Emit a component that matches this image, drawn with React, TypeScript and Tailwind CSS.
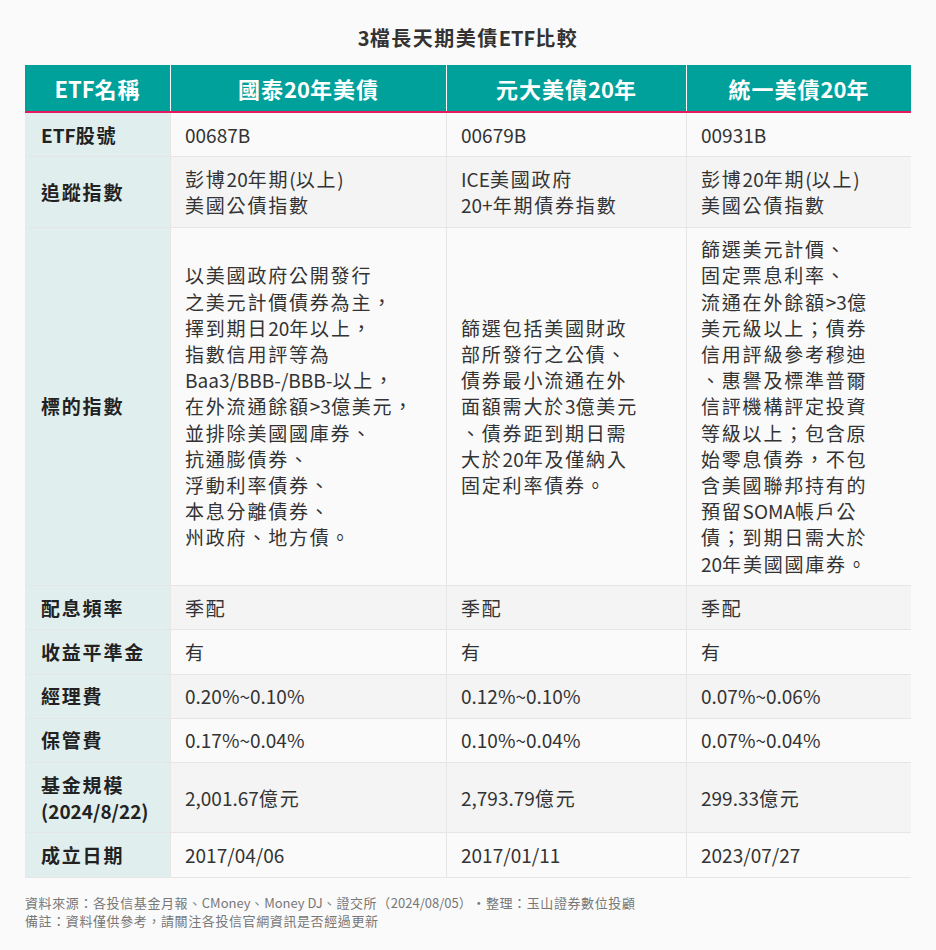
const rows: { label: string[]; cells: string[][] }[] = [
  { label: ["ETF股號"], cells: [["00687B"], ["00679B"], ["00931B"]] },
  {
    label: ["追蹤指數"],
    cells: [
      ["彭博20年期(以上)", "美國公債指數"],
      ["ICE美國政府", "20+年期債券指數"],
      ["彭博20年期(以上)", "美國公債指數"],
    ],
  },
  {
    label: ["標的指數"],
    cells: [
      [
        "以美國政府公開發行",
        "之美元計價債券為主，",
        "擇到期日20年以上，",
        "指數信用評等為",
        "Baa3/BBB-/BBB-以上，",
        "在外流通餘額>3億美元，",
        "並排除美國國庫券、",
        "抗通膨債券、",
        "浮動利率債券、",
        "本息分離債券、",
        "州政府、地方債。",
      ],
      [
        "篩選包括美國財政",
        "部所發行之公債、",
        "債券最小流通在外",
        "面額需大於3億美元",
        "、債券距到期日需",
        "大於20年及僅納入",
        "固定利率債券。",
      ],
      [
        "篩選美元計價、",
        "固定票息利率、",
        "流通在外餘額>3億",
        "美元級以上；債券",
        "信用評級參考穆迪",
        "、惠譽及標準普爾",
        "信評機構評定投資",
        "等級以上；包含原",
        "始零息債券，不包",
        "含美國聯邦持有的",
        "預留SOMA帳戶公",
        "債；到期日需大於",
        "20年美國國庫券。",
      ],
    ],
  },
  { label: ["配息頻率"], cells: [["季配"], ["季配"], ["季配"]] },
  { label: ["收益平準金"], cells: [["有"], ["有"], ["有"]] },
  {
    label: ["經理費"],
    cells: [["0.20%~0.10%"], ["0.12%~0.10%"], ["0.07%~0.06%"]],
  },
  {
    label: ["保管費"],
    cells: [["0.17%~0.04%"], ["0.10%~0.04%"], ["0.07%~0.04%"]],
  },
  {
    label: ["基金規模", "(2024/8/22)"],
    cells: [["2,001.67億元"], ["2,793.79億元"], ["299.33億元"]],
  },
  {
    label: ["成立日期"],
    cells: [["2017/04/06"], ["2017/01/11"], ["2023/07/27"]],
  },
];

const headers = ["國泰20年美債", "元大美債20年", "統一美債20年"];

// CJK glyphs sit wider apart than the latin ones, so latin runs drop the spacing
function Txt({ s }: { s: string }) {
  const parts = s.split(/([\x20-\x7E]+)/).filter(Boolean);
  return (
    <>
      {parts.map((p, i) =>
        /^[\x20-\x7E]+$/.test(p) ? (
          <span key={i} className="tracking-normal">
            {p}
          </span>
        ) : (
          <span key={i}>{p}</span>
        )
      )}
    </>
  );
}

function Lines({ lines }: { lines: string[] }) {
  return (
    <div>
      {lines.map((l, i) => (
        <div key={i}>
          <Txt s={l} />
        </div>
      ))}
    </div>
  );
}

export default function App() {
  return (
    <div
      className="min-h-[950px] w-[936px] bg-[#fafafa] text-[#333]"
      style={{ fontFamily: '"Noto Sans CJK TC", "Noto Sans", sans-serif' }}
    >
      <h1 className="pt-[24px] text-center text-[20px] font-bold leading-[28px] tracking-[1.5px] text-[#333]">
        <Txt s="3檔長天期美債ETF比較" />
      </h1>

      <div className="mx-[25px] mt-[13px] w-[886px]">
        <div className="grid grid-cols-[145px_276px_240px_225px] border-b-2 border-[#e8185f] bg-[#00a19b] text-white">
          <div className="flex h-[46px] items-center justify-center text-[22px] font-bold tracking-[1px]">
            <Txt s="ETF名稱" />
          </div>
          {headers.map((h) => (
            <div
              key={h}
              className="flex h-[46px] items-center justify-center border-l border-white text-[22px] font-bold tracking-[1px]"
            >
              <Txt s={h} />
            </div>
          ))}
        </div>

        {rows.map((row, index) => (
          <div
            key={row.label[0]}
            className={`grid grid-cols-[145px_276px_240px_225px] border-b border-[#e6e6e6] text-[19px] leading-[26.2px] tracking-[1.8px] ${
              index % 2 === 0 ? "bg-[#fafafa]" : "bg-[#f4f4f4]"
            }`}
          >
            <div className="flex items-center bg-[#e0eeee] py-[8.5px] pl-[16px] font-bold text-[#222]">
              <Lines lines={row.label} />
            </div>
            {row.cells.map((c, i) => (
              <div
                key={i}
                className="flex items-center border-l border-[#e6e6e6] py-[8.5px] pl-[14px]"
              >
                <Lines lines={c} />
              </div>
            ))}
          </div>
        ))}

        <div className="mt-[16px] text-[13px] leading-[18px] tracking-[0.6px] text-[#777]">
          <p>
            <Txt s="資料來源：各投信基金月報、CMoney、Money DJ、證交所（2024/08/05）•整理：玉山證券數位投顧" />
          </p>
          <p>
            <Txt s="備註：資料僅供參考，請關注各投信官網資訊是否經過更新" />
          </p>
        </div>
      </div>
    </div>
  );
}
